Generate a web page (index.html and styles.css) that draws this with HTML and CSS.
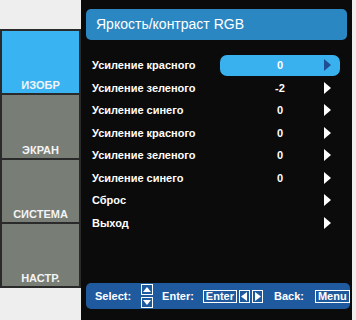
FILE: index.html
```html
<!DOCTYPE html>
<html lang="ru">
<head>
    <meta charset="UTF-8">
    <meta name="viewport" content="width=device-width, initial-scale=1.0">
    <title>Яркость/контраст RGB</title>
    <link rel="stylesheet" href="styles.css">
</head>
<body>
    <div class="screen">
        <div class="tabs">
            <div class="tab active">ИЗОБР</div>
            <div class="tab">ЭКРАН</div>
            <div class="tab">СИСТЕМА</div>
            <div class="tab">НАСТР.</div>
        </div>
        <div class="panel">
            <div class="title">Яркость/контраст RGB</div>
            <div class="menu">
                <div class="row selected">
                    <span class="label">Усиление красного</span>
                    <span class="value"><span class="num">0</span><span class="arrow"></span></span>
                </div>
                <div class="row">
                    <span class="label">Усиление зеленого</span>
                    <span class="value"><span class="num">-2</span><span class="arrow"></span></span>
                </div>
                <div class="row">
                    <span class="label">Усиление синего</span>
                    <span class="value"><span class="num">0</span><span class="arrow"></span></span>
                </div>
                <div class="row">
                    <span class="label">Усиление красного</span>
                    <span class="value"><span class="num">0</span><span class="arrow"></span></span>
                </div>
                <div class="row">
                    <span class="label">Усиление зеленого</span>
                    <span class="value"><span class="num">0</span><span class="arrow"></span></span>
                </div>
                <div class="row">
                    <span class="label">Усиление синего</span>
                    <span class="value"><span class="num">0</span><span class="arrow"></span></span>
                </div>
                <div class="row">
                    <span class="label">Сброс</span>
                    <span class="value"><span class="num"></span><span class="arrow"></span></span>
                </div>
                <div class="row">
                    <span class="label">Выход</span>
                    <span class="value"><span class="num"></span><span class="arrow"></span></span>
                </div>
            </div>
            <div class="help">
                <span class="help-text">Select:</span>
                <svg class="updown" width="12" height="24" viewBox="0 0 12 24">
                    <rect x="0.5" y="0.5" width="11" height="10" fill="none" stroke="#fff"/>
                    <polygon points="2,8 10,8 6,3" fill="#fff"/>
                    <rect x="0.5" y="13.5" width="11" height="10" fill="none" stroke="#fff"/>
                    <polygon points="2,16 10,16 6,21" fill="#fff"/>
                </svg>
                <span class="help-text enter">Enter:</span>
                <span class="key">Enter</span>
                <span class="key small"><svg width="7" height="9" viewBox="0 0 7 9"><polygon points="6,0 6,9 0,4.5" fill="#fff"/></svg></span>
                <span class="key small"><svg width="7" height="9" viewBox="0 0 7 9"><polygon points="1,0 1,9 7,4.5" fill="#fff"/></svg></span>
                <span class="help-text back">Back:</span>
                <span class="key">Menu</span>
            </div>
        </div>
    </div>
</body>
</html>
```

FILE: styles.css
```css
body {
    margin: 0;
    padding: 0;
    background-color: #eeeeee;
    font-family: "Liberation Sans", Arial, sans-serif;
    color: #fff;
}
.screen {
    display: flex;
    width: 356px;
    height: 320px;
}
.tabs {
    width: 77px;
    height: 255px;
    margin-top: 29px;
    padding: 2px;
    background-color: #2a2a2a;
    display: flex;
    flex-direction: column;
    gap: 2px;
}
.tab {
    flex: 1;
    background-color: #787d76;
    display: flex;
    align-items: flex-end;
    justify-content: center;
    padding-bottom: 2px;
    font-size: 11px;
    font-weight: bold;
    color: #f4f4f4;
}
.tab.active {
    background-color: #3ab3f3;
}
.panel {
    width: 261px;
    height: 311px;
    padding: 9px 5px 0 5px;
    background-color: #0b0b0b;
    border-top: 1px solid #4a3a2e;
    margin-top: -1px;
    display: flex;
    flex-direction: column;
}
.title {
    height: 31px;
    line-height: 31px;
    padding-left: 10px;
    background-color: #2b87c2;
    border-radius: 5px;
    font-size: 14px;
}
.menu {
    margin-top: 14px;
}
.row {
    display: flex;
    align-items: center;
    height: 22.5px;
    font-size: 11px;
    font-weight: bold;
}
.label {
    width: 128px;
    padding-left: 6px;
}
.value {
    width: 120px;
    height: 21px;
    display: grid;
    grid-template-columns: 24px 1fr 24px;
    align-items: center;
    border-radius: 7px;
}
.num {
    grid-column: 2;
    text-align: center;
}
.arrow {
    grid-column: 3;
    width: 0;
    height: 0;
    margin-left: 8px;
    border-top: 6px solid transparent;
    border-bottom: 6px solid transparent;
    border-left: 7px solid #fff;
}
.selected .value {
    background-color: #3ab1ef;
}
.selected .arrow {
    border-left-color: #1d4f92;
}
.help {
    margin-top: auto;
    margin-bottom: 11px;
    margin-right: -3px;
    height: 26px;
    padding-left: 9px;
    background-color: #1f5a9f;
    border-radius: 5px;
    display: flex;
    align-items: center;
    font-size: 11px;
    font-weight: bold;
}
.help > * {
    flex-shrink: 0;
}
.updown {
    display: block;
    margin-left: 10px;
}
.help-text.enter {
    margin-left: 9px;
}
.help-text.back {
    margin-left: 11px;
}
.key {
    margin-left: 9px;
    border: 1px solid #fff;
    height: 11px;
    line-height: 11px;
    padding: 0 2px;
}
.key.small {
    margin-left: 2px;
    padding: 0 1px;
    display: flex;
    align-items: center;
}
.key.small + .key.small {
    margin-left: 2px;
}
.back + .key {
    margin-left: 11px;
}
```
